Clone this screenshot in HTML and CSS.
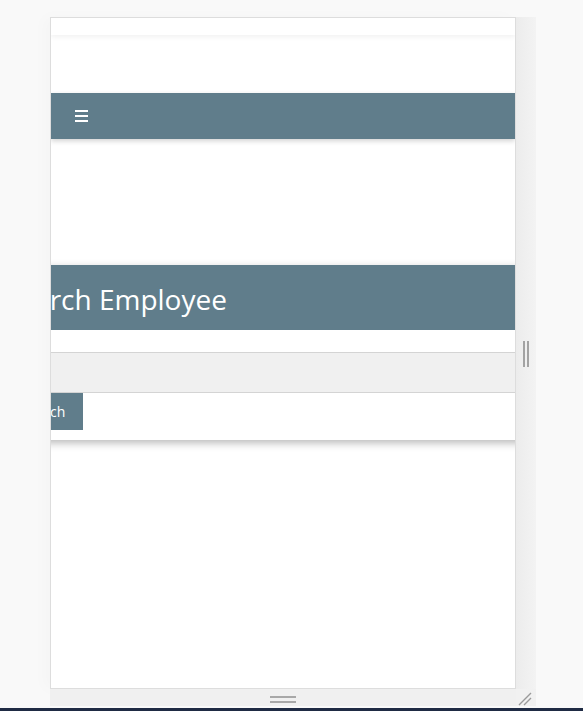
FILE: index.html
```html
<!DOCTYPE html>
<html lang="en">
<head>
<meta charset="utf-8">
<title>Search Employee</title>
<link rel="stylesheet" href="styles.css">
</head>
<body>
  <div class="device">
    <div class="frame">
      <div class="topbar"></div>
      <nav class="navbar">
        <span class="burger"><i></i><i></i><i></i></span>
      </nav>
      <main class="main">
        <section class="card">
          <h1 class="card-title">Search Employee</h1>
          <div class="card-body">
            <div class="field"></div>
            <button class="btn" type="button">Search</button>
          </div>
        </section>
      </main>
    </div>
    <div class="side-handle"><i></i><i></i></div>
    <div class="bottom-handle"><i></i><i></i></div>
    <div class="corner">
      <svg width="14" height="14" viewBox="0 0 14 14"><path d="M13 1 L1 13 M13 6 L6 13" stroke="#9a9a9a" stroke-width="1.4" fill="none"/></svg>
    </div>
  </div>
  <div class="taskbar"></div>
</body>
</html>
```

FILE: styles.css
```css
html, body {
  margin: 0;
  padding: 0;
}
body {
  height: 711px;
  overflow: hidden;
  background: #f9f9f9;
  display: flex;
  flex-direction: column;
  font-family: "Open Sans", "Noto Sans", sans-serif;
}
.device {
  margin: 17px 0 0 50px;
  display: grid;
  grid-template-columns: 466px 20px;
  grid-template-rows: 672px 17px;
}
.frame {
  box-sizing: border-box;
  border: 1px solid #dddddd;
  background: #ffffff;
  overflow: hidden;
  box-shadow: -6px 0 14px rgba(0,0,0,0.02);
}
.topbar {
  height: 17px;
  background: #fff;
  box-shadow: 0 2px 5px rgba(0,0,0,0.06);
  position: relative;
}
.navbar {
  margin-top: 58px;
  height: 46px;
  background: #607d8b;
  display: flex;
  align-items: center;
  padding-left: 24px;
  box-shadow: 0 2px 5px rgba(0,0,0,0.18);
}
.burger {
  display: flex;
  flex-direction: column;
  gap: 3px;
  width: 13px;
}
.burger i {
  display: block;
  height: 2px;
  background: #fff;
}
.main {
  margin: 126px -40px 0 -64px;
}
.card {
  background: #fff;
  box-shadow: 0 3px 8px rgba(0,0,0,0.28);
}
.card-title {
  margin: 0;
  height: 65px;
  box-sizing: border-box;
  padding: 3px 0 0 16px;
  display: flex;
  align-items: center;
  background: #607d8b;
  color: #fff;
  font-weight: 400;
  font-size: 28px;
}
.card-body {
  padding: 22px 0 10px 0;
}
.field {
  height: 41px;
  box-sizing: border-box;
  border-top: 1px solid #d4d4d4;
  border-bottom: 1px solid #d4d4d4;
  background: #f0f0f0;
}
.btn {
  display: block;
  margin-left: 18px;
  height: 37px;
  padding: 0 18px 1px 16px;
  border: 0;
  background: #607d8b;
  color: #fff;
  font-family: inherit;
  font-size: 14px;
}
.side-handle {
  grid-column: 2;
  grid-row: 1;
  background: linear-gradient(to right, #ececec, #f3f3f3);
  display: flex;
  justify-content: center;
  align-items: center;
  gap: 2px;
  padding-top: 2px;
}
.side-handle i {
  width: 2px;
  height: 26px;
  background: #a3a3a3;
}
.bottom-handle {
  grid-column: 1;
  grid-row: 2;
  background: #f0f0f0;
  display: flex;
  flex-direction: column;
  align-items: center;
  justify-content: center;
  gap: 3px;
  padding-top: 3px;
}
.bottom-handle i {
  width: 26px;
  height: 2px;
  background: #a8a8a8;
}
.corner {
  grid-column: 2;
  grid-row: 2;
  background: #f1f1f1;
  display: flex;
  align-items: flex-end;
  padding-left: 2px;
}
.taskbar {
  margin-top: auto;
  height: 3px;
  background: #1f2b44;
}
```
